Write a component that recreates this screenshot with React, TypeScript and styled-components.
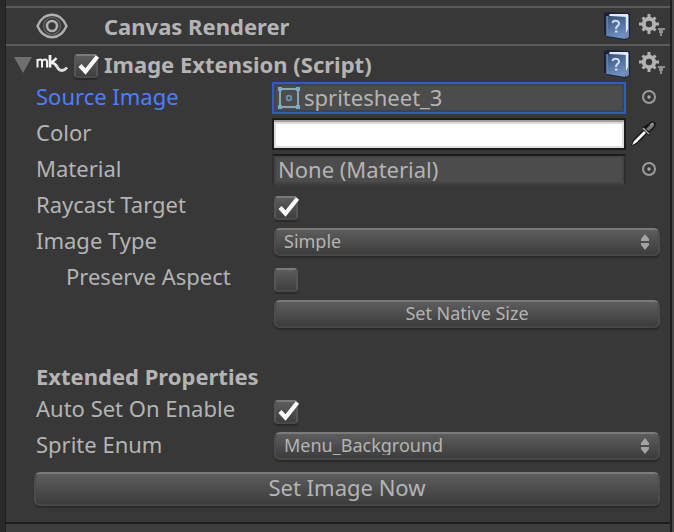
import React, { useId, useState } from "react";
import styled, { createGlobalStyle } from "styled-components";

const color = {
  panel: "#383838",
  gutter: "#292929",
  edge: "#1f1f1f",
  line: "#5b5b5b",
  text: "#b4b4b4",
  accent: "#4c7eff",
  focus: "#3059d6",
};

const GlobalStyle = createGlobalStyle`
  *, *::before, *::after { box-sizing: border-box; }
  body {
    margin: 0;
    background: ${color.gutter};
    color: ${color.text};
    font-family: "Noto Sans", "Open Sans", sans-serif;
    font-size: 22px;
    line-height: 28px;
  }
  button, input, select { font: inherit; color: inherit; margin: 0; }
  svg { display: block; flex: none; }
`;

const Page = styled.div`
  display: flex;
  min-height: 100vh;
  padding-left: 5px;
  background: ${color.gutter};
`;

const Inspector = styled.main`
  flex: 1;
  min-width: 0;
  display: flex;
  flex-direction: column;
  padding-top: 6px;
  background: ${color.panel};
  border-left: 1px solid ${color.edge};
  border-right: 2px solid ${color.edge};
`;

const Scrollbar = styled.div`
  width: 2px;
  background: #4b4b4b;
`;

const Header = styled.header`
  display: flex;
  align-items: center;
  height: 38px;
  padding: 0 4px 0 8px;
  border-top: 2px solid ${color.line};
`;

const FoldSlot = styled.button`
  width: 22px;
  padding: 2px 0 0;
  border: 0;
  background: none;
`;

const IconSlot = styled.div`
  width: 38px;
`;

const ToggleSlot = styled.div`
  width: 30px;
  padding-top: 4px;
`;

const Title = styled.h2`
  flex: 1;
  min-width: 0;
  margin: 0;
  font-size: 22px;
  line-height: 30px;
  font-weight: 700;
  white-space: nowrap;
`;

const HeaderTools = styled.div`
  display: flex;
  align-items: center;
  gap: 8px;
`;

const IconButton = styled.button`
  display: flex;
  align-items: center;
  justify-content: center;
  padding: 0;
  border: 0;
  background: none;
`;

const Properties = styled.section`
  display: grid;
  gap: 4px;
  padding: 0 10px 0 30px;
`;

const Row = styled.div`
  display: grid;
  grid-template-columns: 236px minmax(0, 1fr);
  height: 32px;
`;

const Label = styled.label<{ $active?: boolean; $nested?: boolean }>`
  padding-left: ${(p) => (p.$nested ? 30 : 0)}px;
  color: ${(p) => (p.$active ? color.accent : color.text)};
  white-space: nowrap;
`;

const PickerCell = styled.div`
  display: grid;
  grid-template-columns: minmax(0, 1fr) 34px;
`;

const PickerButton = styled(IconButton)`
  padding: 0 0 2px 12px;
`;

const ControlCell = styled.div`
  display: grid;
  align-content: end;
  padding: 2px 0 2px 2px;
`;

const ObjectBox = styled.div<{ $active?: boolean }>`
  display: flex;
  align-items: center;
  gap: 4px;
  height: 32px;
  padding: 0 4px;
  background: #4c4c4c;
  border: 2px solid ${(p) => (p.$active ? color.focus : "#303030")};
  border-top-color: ${(p) => (p.$active ? color.focus : "#1c1c1c")};
  border-bottom-color: ${(p) => (p.$active ? color.focus : "#3c3c3c")};
  box-shadow: inset 0 0 0 2px #434343;
`;

const ObjectInput = styled.input`
  flex: 1;
  min-width: 0;
  height: 28px;
  padding: 0 0 3px;
  border: 0;
  outline: 0;
  background: none;
`;

const ColorInput = styled.input`
  appearance: none;
  width: 100%;
  height: 32px;
  padding: 0;
  border: 2px solid #1c1c1c;
  border-radius: 0;
  background: #dedede;
  &::-webkit-color-swatch-wrapper { padding: 0; }
  &::-webkit-color-swatch {
    border: 2px solid #dedede;
    border-radius: 0;
    box-shadow: 0 -2px 0 #a0a0a0;
    margin-top: 2px;
  }
`;

const Check = styled.span`
  display: grid;
  width: 26px;
  height: 24px;
  > * { grid-area: 1 / 1; }
  > svg { pointer-events: none; visibility: hidden; }
  > input:checked + svg { visibility: visible; }
`;

const CheckInput = styled.input`
  appearance: none;
  width: 24px;
  height: 24px;
  border: 2px solid #565656;
  border-top-color: #7a7a7a;
  border-bottom-color: #494949;
  border-radius: 4px;
  background: linear-gradient(#5c5c5c, #3f3f3f) padding-box;
  box-shadow: 0 2px 1px #2a2a2a;
`;

const raised = `
  border: 2px solid #4c4c4c;
  border-top-color: #7b7b7b;
  border-bottom-color: #464646;
  border-radius: 6px;
  background: linear-gradient(#5d5d5d, #3c3c3c) padding-box;
  box-shadow: 0 2px 1px #2a2a2a;
`;

const SelectBox = styled.div`
  display: grid;
  align-items: center;
  > * { grid-area: 1 / 1; }
  > svg { justify-self: end; margin-right: 10px; pointer-events: none; }
`;

const Select = styled.select`
  ${raised}
  appearance: none;
  width: 100%;
  height: 28px;
  padding: 0 30px 3px 8px;
  font-size: 18px;
  line-height: 22px;
`;

const Button = styled.button<{ $large?: boolean }>`
  ${raised}
  width: 100%;
  height: ${(p) => (p.$large ? 34 : 28)}px;
  padding: 0 0 ${(p) => (p.$large ? 4 : 3)}px;
  font-size: ${(p) => (p.$large ? 22 : 18)}px;
  line-height: ${(p) => (p.$large ? 26 : 20)}px;
`;

const SectionTitle = styled.h3`
  height: 32px;
  margin: 28px 0 -4px;
  font-size: 22px;
  line-height: 28px;
  font-weight: 700;
`;

const Actions = styled.div`
  padding: 10px 10px 16px 28px;
`;

const Footer = styled.footer`
  flex: 1;
  min-height: 8px;
  border-top: 2px solid ${color.edge};
  background: #3e3e3e;
`;

const EyeIcon = () => (
  <svg width="32" height="26" viewBox="0 0 32 26" fill="none" stroke="#b0b0b0">
    <path d="M1.5 13C4.500 6 9.500 1.800 16 1.800S27.500 6 30.500 13C27.500 20 22.500 24.200 16 24.200S4.500 20 1.500 13Z" strokeWidth="2.400" />
    <circle cx="16" cy="13" r="8.500" stroke="#6b6b6b" strokeWidth="1.200" />
    <circle cx="16" cy="13" r="5" strokeWidth="2.600" />
  </svg>
);

const FoldIcon = () => (
  <svg width="18" height="16" viewBox="0 0 18 16">
    <path d="M0 0H18L9 16Z" fill="#6f6f6f" />
  </svg>
);

const ScriptLogo = () => (
  <svg width="32" height="18" viewBox="0 0 32 18" fill="none" stroke="#efefef">
    <path d="M1.500 4V12.500M1.500 6C3 3.800 6 4 6 6.500V12.500M6 6.500C7 3.800 11 4 11 6.500V12.500" strokeWidth="2" />
    <path d="M14 0V12.500" strokeWidth="2.800" />
    <path d="M20.500 3C18.500 5.500 17 7 14.500 7.500C18 7.800 19.500 9 21 11.500" strokeWidth="2.600" />
    <path d="M20.500 10.500C22.500 16.500 27.500 17 31 12.500" strokeWidth="2.800" stroke="#dddddd" />
  </svg>
);

const HelpIcon = () => (
  <svg width="26" height="28" viewBox="0 0 26 28">
    <defs>
      <linearGradient id="bookCover" x1="0" y1="0" x2="0.3" y2="1">
        <stop offset="0" stopColor="#34507a" />
        <stop offset="1" stopColor="#6e90c2" />
      </linearGradient>
    </defs>
    <path d="M0 1L4 0L25 1L26 3V25L22 28L3 25L0 22Z" fill="#15223a" />
    <path d="M5 2L25 3V25L22 27Z" fill="#7088ae" />
    <path d="M6 2H24V17L22 21V5L5 4Z" fill="#e5e9ef" />
    <path d="M3 4L21 5V27L3 24Z" fill="url(#bookCover)" />
    <path d="M3 4V24" stroke="#6a88b8" strokeWidth="1.500" />
    <path d="M8.500 11C9 9 10.500 8.600 12 8.800C14.500 9 15.500 11 14.800 12.500C14 14 12 14.300 12 17" fill="none" stroke="#cfdef3" strokeWidth="2" />
    <path d="M11 18.500H13.500V20.500H11Z" fill="#cfdef3" />
  </svg>
);

const GearIcon = () => (
  <svg width="28" height="24" viewBox="0 0 28 24">
    <g fill="none" stroke="#b2b2b2">
      <circle cx="11" cy="10" r="5.200" strokeWidth="4" />
      <path
        d="M11 0V4M11 16V20M1 10H5M17 10H21M4.500 3.500L7 6M15 14L17.500 16.500M4.500 16.500L7 14M15 6L17.500 3.500"
        strokeWidth="3"
      />
    </g>
    <path d="M20 14H27V16H25V19H24V22H22V19H21V16H20Z" fill="#8f8f8f" />
  </svg>
);

const SpriteIcon = () => (
  <svg width="22" height="22" viewBox="0 0 22 22">
    <path d="M2 2H20V20H2Z" fill="none" stroke="#8ba5b3" strokeWidth="2" />
    <path d="M0 0H4V4H0ZM18 0H22V4H18ZM0 18H4V22H0ZM18 18H22V22H18Z" fill="#76abcf" />
    <circle cx="11" cy="11" r="2.300" fill="none" stroke="#6594b4" strokeWidth="1.800" />
  </svg>
);

const TargetIcon = () => (
  <svg width="14" height="14" viewBox="0 0 14 14">
    <circle cx="7" cy="7" r="6" fill="none" stroke="#9c9c9c" strokeWidth="2" />
    <circle cx="7" cy="7" r="1.700" fill="#a8a8a8" />
  </svg>
);

const DropperIcon = () => (
  <svg width="28" height="28" viewBox="0 0 28 28">
    <path d="M2 26L4 20L15 9L13 7L16 6L23 1L27 3L26 7L21 12L20 16L18 14L8 24Z" fill="#151515" />
    <path d="M3 25L5 21L15 11L17 13L7 23Z" fill="#f4f4f4" />
    <path d="M17 9L22 4L25 3V6L20 11Z" fill="#777" />
    <path d="M14 8L20 14M21 5L24 3" stroke="#a6a6a6" strokeWidth="1.500" />
  </svg>
);

const TickIcon = () => (
  <svg width="26" height="24" viewBox="0 0 26 24">
    <path d="M6 11.500L11.500 17.500L23.500 2.500" fill="none" stroke="#fafafa" strokeWidth="4.200" />
  </svg>
);

const UpDownIcon = () => (
  <svg width="10" height="16" viewBox="0 0 10 16" fill="#a3a3a3">
    <path d="M5 0L9 5V7H1V5ZM1 9H9V11L5 16L1 11Z" />
  </svg>
);

function Toggle({ id, label, initial = false }: { id?: string; label?: string; initial?: boolean }) {
  const [on, setOn] = useState(initial);
  return (
    <Check>
      <CheckInput id={id} aria-label={label} type="checkbox" checked={on} onChange={(e) => setOn(e.target.checked)} />
      <TickIcon />
    </Check>
  );
}

function Tools({ name }: { name: string }) {
  return (
    <HeaderTools>
      <IconButton aria-label={`${name} help`}><HelpIcon /></IconButton>
      <IconButton aria-label={`${name} settings`}><GearIcon /></IconButton>
    </HeaderTools>
  );
}

function ObjectRow({ label, value, active }: { label: string; value: string; active?: boolean }) {
  const id = useId();
  return (
    <Row>
      <Label htmlFor={id} $active={active}>{label}</Label>
      <PickerCell>
        <ObjectBox $active={active}>
          {active && <SpriteIcon />}
          <ObjectInput id={id} value={value} readOnly />
        </ObjectBox>
        <PickerButton aria-label={`Select ${label}`}><TargetIcon /></PickerButton>
      </PickerCell>
    </Row>
  );
}

function ColorRow() {
  const id = useId();
  const [value, setValue] = useState("#ffffff");
  return (
    <Row>
      <Label htmlFor={id}>Color</Label>
      <PickerCell>
        <ColorInput id={id} type="color" value={value} onChange={(e) => setValue(e.target.value)} />
        <IconButton aria-label="Pick color from screen"><DropperIcon /></IconButton>
      </PickerCell>
    </Row>
  );
}

function ToggleRow({ label, initial, nested }: { label: string; initial?: boolean; nested?: boolean }) {
  const id = useId();
  return (
    <Row>
      <Label htmlFor={id} $nested={nested}>{label}</Label>
      <ControlCell><Toggle id={id} initial={initial} /></ControlCell>
    </Row>
  );
}

function SelectRow({ label, value }: { label: string; value: string }) {
  const id = useId();
  return (
    <Row>
      <Label htmlFor={id}>{label}</Label>
      <ControlCell>
        <SelectBox>
          <Select id={id} defaultValue={value}><option>{value}</option></Select>
          <UpDownIcon />
        </SelectBox>
      </ControlCell>
    </Row>
  );
}

export default function App() {
  return (
    <>
      <GlobalStyle />
      <Page>
        <Inspector>
          <Header>
            <FoldSlot as="span" />
            <IconSlot><EyeIcon /></IconSlot>
            <ToggleSlot />
            <Title>Canvas Renderer</Title>
            <Tools name="Canvas Renderer" />
          </Header>
          <Header>
            <FoldSlot aria-label="Collapse Image Extension"><FoldIcon /></FoldSlot>
            <IconSlot><ScriptLogo /></IconSlot>
            <ToggleSlot><Toggle label="Enable Image Extension" initial /></ToggleSlot>
            <Title>Image Extension (Script)</Title>
            <Tools name="Image Extension" />
          </Header>
          <Properties>
            <ObjectRow label="Source Image" value="spritesheet_3" active />
            <ColorRow />
            <ObjectRow label="Material" value="None (Material)" />
            <ToggleRow label="Raycast Target" initial />
            <SelectRow label="Image Type" value="Simple" />
            <ToggleRow label="Preserve Aspect" nested />
            <Row>
              <span />
              <ControlCell><Button>Set Native Size</Button></ControlCell>
            </Row>
            <SectionTitle>Extended Properties</SectionTitle>
            <ToggleRow label="Auto Set On Enable" initial />
            <SelectRow label="Sprite Enum" value="Menu_Background" />
          </Properties>
          <Actions><Button $large>Set Image Now</Button></Actions>
          <Footer />
        </Inspector>
        <Scrollbar />
      </Page>
    </>
  );
}
